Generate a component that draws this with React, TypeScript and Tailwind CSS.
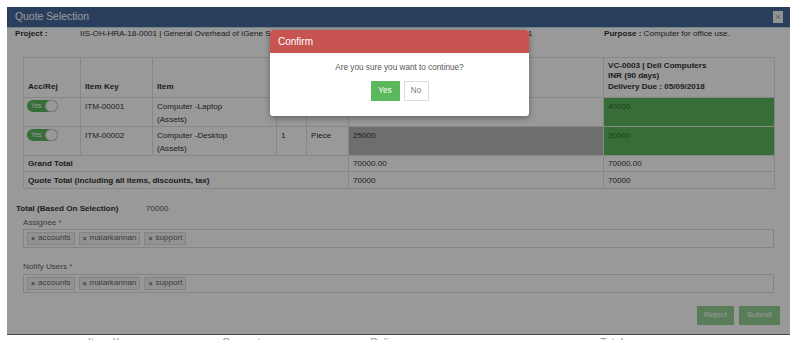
import React from 'react';

const tags = ['accounts', 'malarkannan', 'support'];

const Toggle = () => (
  <div className="flex h-[12px] w-[31px] items-center rounded-full bg-[#5cb85c] pl-[4px]">
    <span className="text-[6.5px] leading-none text-white">Yes</span>
    <span className="ml-auto h-[12px] w-[13px] rounded-full border border-[#cfcfcf] bg-white" />
  </div>
);

const TagBox = ({ className = '' }: { className?: string }) => (
  <div className={`flex h-[19px] items-center gap-[4px] border border-[#dcdcdc] bg-white px-[3px] ${className}`}>
    {tags.map((t) => (
      <span
        key={t}
        className="flex h-[13px] items-center gap-[3px] border border-[#dcdcdc] bg-[#f3f3f3] px-[3px] text-[#666]"
      >
        <span className="text-[7px] font-bold leading-none">×</span>
        {t}
      </span>
    ))}
  </div>
);

const td = 'border border-[#e2e2e2] px-[4px] align-top pt-[2px] leading-[13px]';
const th = 'border border-[#e2e2e2] px-[4px] pb-[5px] align-bottom text-left font-bold leading-[10.5px]';
const tt = 'border border-[#e2e2e2] px-[4px] align-middle leading-[11px]';

export default function App() {
  return (
    <div className="h-[340px] w-[795px] overflow-hidden bg-white text-[8.1px] text-[#333] [font-family:'Liberation_Sans',Arial,sans-serif]">
      <div className="pl-[7px] pt-[7px]">
        <div className="relative h-[327px] w-[783px] bg-white">
          {/* title bar */}
          <div className="flex h-[21px] items-center justify-between border-b border-[#b5e0e6] bg-[#46699d] pl-[8px] pr-[7px]">
            <span className="text-[10.4px] text-white">Quote Selection</span>
            <span className="flex h-[12px] w-[10px] items-center justify-center bg-[#f4f4f4] text-[9px] leading-none text-[#999]">×</span>
          </div>

          {/* project / purpose */}
          <div className="flex h-[11px] items-center pl-[8px] leading-[11px]">
            <span className="w-[65px] font-bold">Project :</span>
            <span className="w-[524px] whitespace-nowrap">
              IIS-OH-HRA-18-0001 | General Overhead of iGene Systems Private Limited, Bangalore HQ Branches | IIS-OH-HRA-18-00001
            </span>
            <span className="font-bold">Purpose :</span>
            <span>&nbsp;Computer for office use.</span>
          </div>

          {/* quote table */}
          <table className="ml-[16px] mt-[18px] w-[751px] table-fixed border-collapse">
            <colgroup>
              <col className="w-[57px]" />
              <col className="w-[72px]" />
              <col className="w-[124px]" />
              <col className="w-[30px]" />
              <col className="w-[42px]" />
              <col className="w-[255px]" />
              <col className="w-[171px]" />
            </colgroup>
            <tbody>
              <tr className="h-[40px]">
                <td className={th}>Acc/Rej</td>
                <td className={th}>Item Key</td>
                <td className={th}>Item</td>
                <td className={th}>Qty</td>
                <td className={th}>Unit</td>
                <td className={th}>
                  VC-0001 | HP World
                  <br />
                  INR (30 days)
                  <br />
                  Delivery Due : 01/09/2018
                </td>
                <td className={th}>
                  VC-0003 | Dell Computers
                  <br />
                  INR (90 days)
                  <br />
                  Delivery Due : 05/09/2018
                </td>
              </tr>
              <tr className="h-[28px]">
                <td className={`${td} pl-[3px]`}>
                  <Toggle />
                </td>
                <td className={td}>ITM-00001</td>
                <td className={td}>
                  Computer -Laptop
                  <br />
                  (Assets)
                </td>
                <td className={td}>1</td>
                <td className={td}>Piece</td>
                <td className={td}>30000</td>
                <td className={`${td} bg-[#5cb85c] text-[#2f6a31]`}>40000</td>
              </tr>
              <tr className="h-[28px]">
                <td className={`${td} pl-[3px]`}>
                  <Toggle />
                </td>
                <td className={td}>ITM-00002</td>
                <td className={td}>
                  Computer -Desktop
                  <br />
                  (Assets)
                </td>
                <td className={td}>1</td>
                <td className={td}>Piece</td>
                <td className={`${td} bg-[#b8b8b8]`}>25000</td>
                <td className={`${td} bg-[#5cb85c] text-[#2f6a31]`}>30000</td>
              </tr>
              <tr className="h-[16px]">
                <td colSpan={5} className={`${tt} font-bold`}>
                  Grand Total
                </td>
                <td className={tt}>70000.00</td>
                <td className={tt}>70000.00</td>
              </tr>
              <tr className="h-[17px]">
                <td colSpan={5} className={`${tt} font-bold`}>
                  Quote Total (including all items, discounts, tax)
                </td>
                <td className={tt}>70000</td>
                <td className={tt}>70000</td>
              </tr>
            </tbody>
          </table>

          {/* totals and assignees */}
          <div className="mt-[14px] flex pl-[9px] leading-[11px]">
            <span className="w-[130px] font-bold">Total (Based On Selection)</span>
            <span className="text-[#555]">70000</span>
          </div>
          <div className="mx-[16px]">
            <div className="mt-[3px] leading-[11px] text-[#666]">
              Assignee <span className="text-[#d9534f]">*</span>
            </div>
            <TagBox className="mt-[1px]" />
            <div className="mt-[13px] leading-[11px] text-[#666]">
              Notify Users <span className="text-[#d9534f]">*</span>
            </div>
            <TagBox className="mt-[2px] h-[18px]" />
          </div>
          <div className="mt-[13px] flex justify-end gap-[5px] pr-[10px]">
            <button className="h-[19px] w-[37px] bg-[#5cb85c] text-[8.1px] text-white opacity-65">Reject</button>
            <button className="h-[19px] w-[41px] bg-[#5cb85c] text-[8.1px] text-white opacity-65">Submit</button>
          </div>

          {/* backdrop */}
          <div className="absolute inset-0 bg-black/40" />

          {/* confirm dialog */}
          <div className="absolute left-[263px] top-[23px] w-[259px] overflow-hidden rounded-[3px] bg-white shadow-[0_2px_6px_rgba(0,0,0,0.35)]">
            <div className="flex h-[23px] items-center bg-[#c75451] pl-[8px] text-[10px] text-white">Confirm</div>
            <div className="flex flex-col items-center pb-[15px] pt-[9px]">
              <div className="text-[8.2px] leading-[11px] text-[#555]">Are you sure you want to continue?</div>
              <div className="mt-[8px] flex gap-[4px]">
                <button className="h-[20px] w-[29px] bg-[#5cb85c] text-[8.2px] text-white">Yes</button>
                <button className="h-[20px] w-[25px] border border-[#ddd] bg-white text-[8.2px] text-[#777]">No</button>
              </div>
            </div>
          </div>
        </div>
        <div className="h-[1px] w-[783px] bg-[#4a4a4a]" />
        <div className="mt-[2px] flex text-[11px] leading-[11px] text-[#999]">
          <span className="ml-[81px] w-[134px]">Item Key</span>
          <span className="w-[148px]">Computer</span>
          <span className="w-[230px]">Delivery</span>
          <span>Total</span>
        </div>
      </div>
    </div>
  );
}
